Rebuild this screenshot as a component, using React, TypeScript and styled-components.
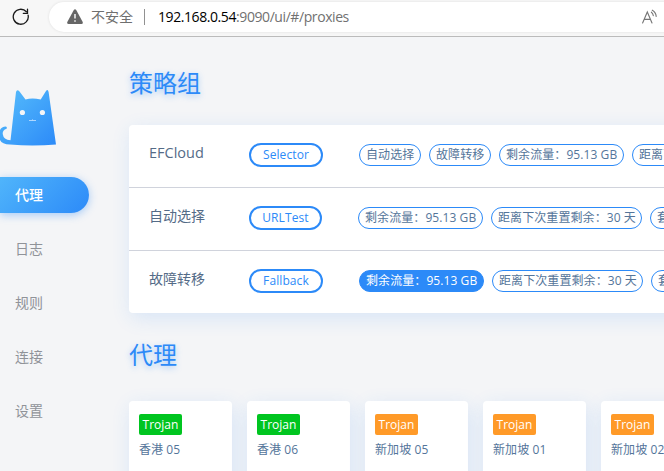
import React from 'react';
import styled, { createGlobalStyle } from 'styled-components';

const GlobalStyle = createGlobalStyle`
  * { box-sizing: border-box; }
  html, body { margin: 0; padding: 0; overflow: hidden; }
  body { background: #f4f5f7; font-family: "Open Sans", "Noto Sans CJK SC", sans-serif; }
`;

const Window = styled.div`
  width: 664px;
  height: 471px;
  overflow: hidden;
  display: flex;
  flex-direction: column;
  background: #f4f5f7;
`;

const BrowserBar = styled.header`
  flex: none;
  height: 37px;
  display: flex;
  align-items: flex-start;
  background: #f7f7f7;
  border-bottom: 1px solid #bbb;
`;

const ReloadIcon = styled.svg`
  flex: none;
  width: 18px;
  height: 18px;
  margin: 8px 22px 0 12px;
`;

const AddressBar = styled.div`
  flex: none;
  width: 640px;
  height: 30px;
  margin: 2px 0 0 -3px;
  padding-left: 18px;
  display: flex;
  align-items: center;
  border-radius: 15px;
  background: #fff;
  box-shadow: 0 0 3px rgba(0, 0, 0, 0.1);
  white-space: nowrap;
`;

const WarningIcon = styled.svg`
  flex: none;
  width: 16px;
  height: 16px;
  margin-top: -1px;
`;

const Security = styled.span`
  margin-left: 8px;
  font-size: 14px;
  line-height: 20px;
  color: #6f6f6f;
`;

const Divider = styled.i`
  width: 1px;
  height: 16px;
  margin: 0 13px 0 11px;
  background: #919191;
`;

const Url = styled.span`
  width: 484px;
  font-size: 14px;
  line-height: 20px;
  letter-spacing: -0.42px;
  color: #717171;
`;

const Host = styled.span`
  color: #000;
`;

const ReadAloudIcon = styled.svg`
  flex: none;
  width: 17px;
  height: 16px;
  margin-top: -1px;
`;

const Page = styled.div`
  flex: 1;
  display: flex;
  min-height: 0;
`;

const Sidebar = styled.nav`
  flex: none;
  width: 129px;
  padding-top: 51px;
`;

const Logo = styled.svg`
  display: block;
  width: 60px;
  height: 60px;
`;

const Menu = styled.ul`
  margin: 29px 0 0;
  padding: 0;
  list-style: none;
  display: flex;
  flex-direction: column;
  gap: 18px;
`;

const MenuItem = styled.li<{ $active?: boolean }>`
  width: 89px;
  height: 36px;
  padding-left: 15px;
  border-radius: 0 18px 18px 0;
  font-size: 14px;
  line-height: 36px;
  color: ${p => (p.$active ? '#fff' : '#909399')};
  font-weight: ${p => (p.$active ? 500 : 400)};
  background: ${p => (p.$active ? 'linear-gradient(135deg, #50b5fb, #2c8af8)' : 'none')};
  box-shadow: ${p => (p.$active ? '0 2px 8px rgba(44, 138, 248, 0.4)' : 'none')};
`;

const Content = styled.main`
  flex: none;
  width: 590px;
  padding-top: 28px;
`;

const Title = styled.h1`
  margin: 0;
  font-size: 24px;
  font-weight: 400;
  line-height: 36px;
  color: #2c8af8;
  text-shadow: 0 2px 6px rgba(44, 138, 248, 0.4);
`;

const GroupPanel = styled.section`
  margin: 24px 0;
  border-radius: 4px;
  background: #fff;
  box-shadow: 2px 5px 20px rgba(44, 138, 248, 0.14);
`;

const GroupRow = styled.div`
  height: 63px;
  padding: 18px 0 0 20px;
  display: flex;
  align-items: flex-start;
  white-space: nowrap;
  overflow: hidden;
  &:not(:last-child) { border-bottom: 1px solid #d0d3dc; }
  &:last-child { height: 62px; }
`;

const GroupName = styled.span<{ $latin: boolean }>`
  flex: none;
  width: 100px;
  font-size: ${p => (p.$latin ? 14.5 : 14)}px;
  line-height: 20px;
  color: #546b87;
`;

const GroupType = styled.span<{ $width: number }>`
  flex: none;
  width: ${p => p.$width}px;
  height: 24px;
  margin-right: 36px;
  border: 2px solid #2c8af8;
  border-radius: 12px;
  font-size: 12px;
  line-height: 20px;
  letter-spacing: 0.1px;
  text-align: center;
  color: #2c8af8;
`;

const TagList = styled.div`
  display: flex;
  gap: 8px;
  padding-top: 1px;
`;

const Tag = styled.span<{ $active?: boolean; $width: number }>`
  flex: none;
  width: ${p => p.$width}px;
  height: 22px;
  padding-left: 6px;
  border: 1px solid #2c8af8;
  border-radius: 11px;
  font-size: 12px;
  line-height: 20px;
  letter-spacing: 0.08px;
  color: ${p => (p.$active ? '#fff' : '#54759a')};
  background: ${p => (p.$active ? '#2c8af8' : '#fff')};
`;

const ProxyGrid = styled.section`
  margin-top: 28px;
  display: grid;
  grid-template-columns: repeat(5, 103px);
  column-gap: 15px;
`;

const ProxyCard = styled.article`
  height: 110px;
  padding: 13px 10px;
  border-radius: 4px;
  background: #fff;
  box-shadow: 2px 5px 20px rgba(44, 138, 248, 0.14);
  white-space: nowrap;
`;

const Protocol = styled.span<{ $color: string }>`
  display: block;
  width: 43px;
  height: 21px;
  border-radius: 2px;
  font-size: 12px;
  line-height: 21px;
  text-align: center;
  color: #fff;
  background: ${p => p.$color};
`;

const ProxyName = styled.div`
  margin-top: 5px;
  font-size: 12px;
  line-height: 20px;
  letter-spacing: 0.08px;
  color: #54759a;
`;

const TRAFFIC = { text: '剩余流量：95.13 GB', width: 125 };
const RESET = { text: '距离下次重置剩余：30 天', width: 151 };
const EXPIRY = { text: '套餐到期：长期有效', width: 124 };

const groups = [
  { name: 'EFCloud', latin: true, type: 'Selector', width: 74, active: -1,
    tags: [{ text: '自动选择', width: 62 }, { text: '故障转移', width: 62 }, TRAFFIC, RESET] },
  { name: '自动选择', latin: false, type: 'URLTest', width: 73, active: -1, tags: [TRAFFIC, RESET, EXPIRY] },
  { name: '故障转移', latin: false, type: 'Fallback', width: 74, active: 0, tags: [TRAFFIC, RESET, EXPIRY] },
];

const proxies = [
  { name: '香港 05', color: '#00c520' },
  { name: '香港 06', color: '#00c520' },
  { name: '新加坡 05', color: '#ff9a28' },
  { name: '新加坡 01', color: '#ff9a28' },
  { name: '新加坡 02', color: '#ff9a28' },
];

export default function App() {
  return (
    <>
      <GlobalStyle />
      <Window>
        <BrowserBar>
          <ReloadIcon viewBox="0 0 18 18" fill="none" stroke="#1b1b1b" strokeWidth="1.3" strokeLinecap="round">
            <path d="M16.1 7.2A7.5 7.5 0 1 1 14.4 3.8" />
            <path d="M15.5 1.2V5.3H11.3" />
          </ReloadIcon>
          <AddressBar>
            <WarningIcon viewBox="0 0 16 16">
              <path d="M6.8 1.1Q8 -.5 9.2 1.1L15.7 13Q16.2 15 14.5 15H1.5Q-.2 15 .3 13Z" fill="#666" />
              <path d="M8 5V9.5M8 11.3V12.8" stroke="#fff" strokeWidth="1.4" />
            </WarningIcon>
            <Security>不安全</Security>
            <Divider />
            <Url><Host>192.168.0.54</Host>:9090/ui/#/proxies</Url>
            <ReadAloudIcon viewBox="0 0 17 16" fill="none" stroke="#757575" strokeWidth="1.1" strokeLinecap="round">
              <path d="M0.6 14L5.3 3L10 14M2.2 10.4H8.4" />
              <path d="M9.4 3.2Q11 4.5 11.3 6.6M10.3 1.2Q13.9 3.3 14.2 7.4" />
            </ReadAloudIcon>
          </AddressBar>
        </BrowserBar>
        <Page>
          <Sidebar>
            <Logo viewBox="0 0 60 60">
              <defs>
                <linearGradient id="cat" x1="0" y1="0" x2="1" y2="1">
                  <stop offset="0" stopColor="#57befc" />
                  <stop offset="1" stopColor="#2c8af8" />
                </linearGradient>
              </defs>
              <path
                d="M10.5 52.3L16 4Q17 .6 19.5 3.5L25.5 11.4Q32 9.6 40.7 11.4L46 3Q47.8 .8 48.6 4L56 56.4Q34 58.5 10 56.6Q2 56.4 0 52V42Q1.5 38.5 6 38.5Q7.5 39.5 6.6 40.7Q2.4 42 2.7 46Q3.5 51.8 10.5 52.3Z"
                fill="url(#cat)"
              />
              <circle cx="22.4" cy="24.5" r="2.6" fill="#f4f5f7" />
              <circle cx="42.4" cy="24.5" r="2.6" fill="#f4f5f7" />
              <path d="M29 32.5H36M32.5 31.4V32.5" stroke="#b9dcff" strokeWidth="0.9" />
            </Logo>
            <Menu>
              <MenuItem $active>代理</MenuItem>
              <MenuItem>日志</MenuItem>
              <MenuItem>规则</MenuItem>
              <MenuItem>连接</MenuItem>
              <MenuItem>设置</MenuItem>
            </Menu>
          </Sidebar>
          <Content>
            <Title>策略组</Title>
            <GroupPanel>
              {groups.map(group => (
                <GroupRow key={group.name}>
                  <GroupName $latin={group.latin}>{group.name}</GroupName>
                  <GroupType $width={group.width}>{group.type}</GroupType>
                  <TagList>
                    {group.tags.map((tag, i) => (
                      <Tag key={tag.text} $width={tag.width} $active={i === group.active}>{tag.text}</Tag>
                    ))}
                  </TagList>
                </GroupRow>
              ))}
            </GroupPanel>
            <Title>代理</Title>
            <ProxyGrid>
              {proxies.map(proxy => (
                <ProxyCard key={proxy.name}>
                  <Protocol $color={proxy.color}>Trojan</Protocol>
                  <ProxyName>{proxy.name}</ProxyName>
                </ProxyCard>
              ))}
            </ProxyGrid>
          </Content>
        </Page>
      </Window>
    </>
  );
}
